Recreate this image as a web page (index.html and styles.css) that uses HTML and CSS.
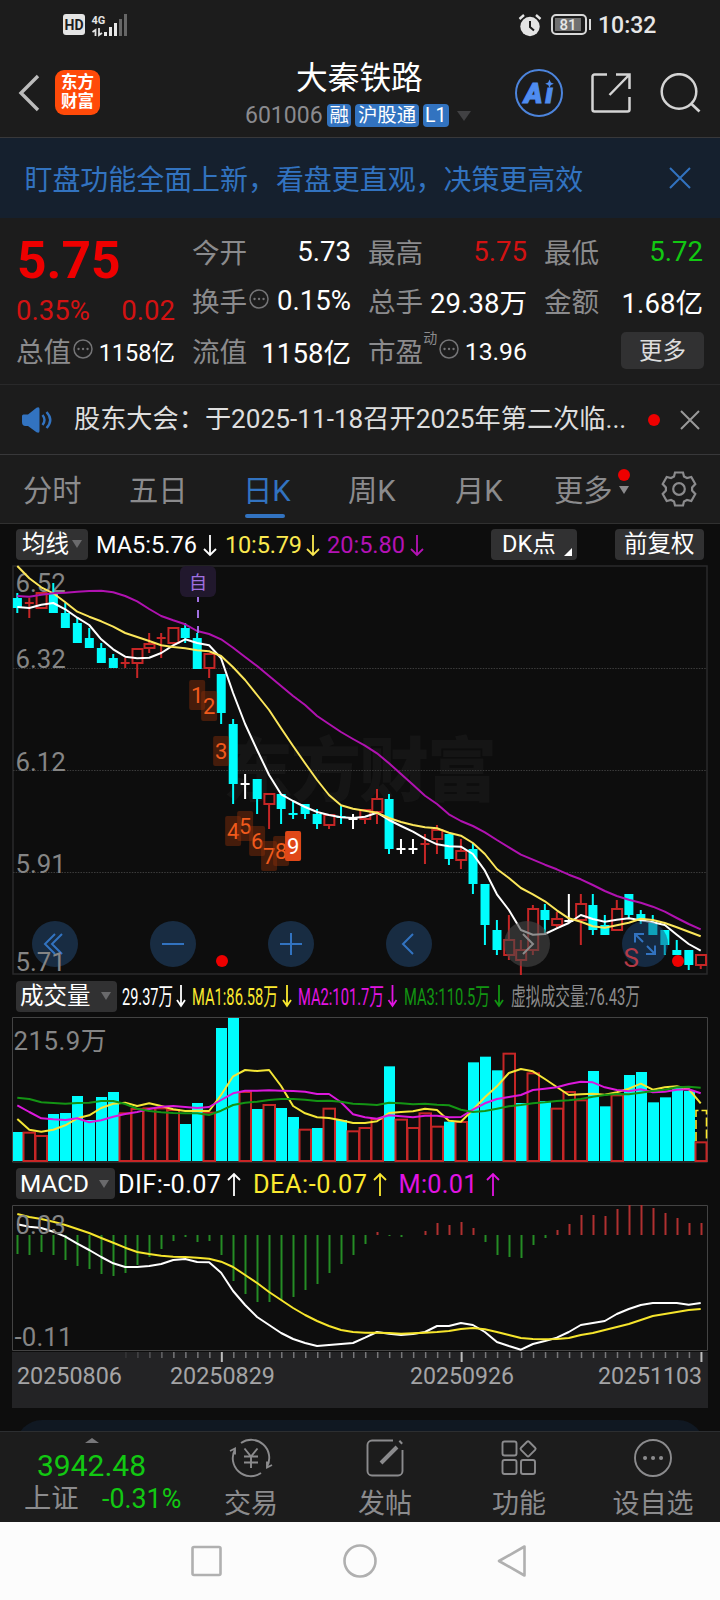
FILE: index.html
```html
<!DOCTYPE html>
<html lang="zh-CN">
<head>
    <meta charset="utf-8">
    <title>大秦铁路 601006</title>
    <link rel="stylesheet" href="styles.css">
</head>
<body>
    <div class="statusbar">
        <span class="hd">HD</span>
        <svg class="signal" width="38" height="26" viewBox="90 11 38 26">
            <text x="91.5" y="23" class="net">4G</text>
            <path d="M95.5 35v-6l-3 2M99 27v7l3-2" fill="none" stroke="#e4e4e4" stroke-width="1.8"/>
            <path d="M105.500 35v-4M110.500 35v-9M115.500 35v-13" stroke="#e8e8e8" stroke-width="3"/>
            <path d="M120.500 35V18M125.500 35V13" stroke="#666" stroke-width="3"/>
        </svg>
        <svg class="alarm" width="24" height="24" viewBox="0 0 24 24">
            <circle cx="12" cy="13.500" r="9.700" fill="#e4e4e4"/>
            <path d="M12 8v6l4 3.500" fill="none" stroke="#1c1c1c" stroke-width="2"/>
            <path d="M1.500 6l4.500-4M22.500 6L18 2" stroke="#e4e4e4" stroke-width="2.400"/>
        </svg>
        <span class="battery"><b>81</b></span>
        <span class="clock">10:32</span>
    </div>

    <div class="header">
        <svg class="back" width="24" height="38" viewBox="0 0 24 38"><path d="M21 2L4 19l17 17" fill="none" stroke="#bcbcbc" stroke-width="3.400"/></svg>
        <div class="logo">东方<br>财富</div>
        <div class="stock">
            <div class="name">大秦铁路</div>
            <div class="code"><span>601006</span><i>融</i><i>沪股通</i><i>L1</i><em></em></div>
        </div>
        <svg class="ai" width="48" height="48" viewBox="0 0 48 48">
            <circle cx="24" cy="24" r="23" fill="none" stroke="#4c84dc" stroke-width="2"/>
            <text x="9" y="34" class="ai-text" textLength="29">Aı</text>
            <path d="M34.500 10.500l1.300 3 3 1.300-3 1.300-1.300 3-1.300-3-3-1.300 3-1.300z" fill="#4f8cf0"/>
        </svg>
        <svg class="share" width="40" height="40" viewBox="0 0 40 40">
            <path d="M16 1.500H3.500a2 2 0 0 0-2 2v33a2 2 0 0 0 2 2h33a2 2 0 0 0 2-2V24M25 1.500h13.500V16M38 2L18.500 22" fill="none" stroke="#d4d4d4" stroke-width="2.500"/>
        </svg>
        <svg class="search" width="41" height="40" viewBox="0 0 41 40">
            <circle cx="19" cy="18.500" r="17.300" fill="none" stroke="#d4d4d4" stroke-width="2.500"/>
            <path d="M31 30.500l8.500 8" stroke="#d4d4d4" stroke-width="2.700"/>
        </svg>
    </div>

    <div class="banner">
        <span>盯盘功能全面上新，看盘更直观，决策更高效</span>
        <svg width="22" height="22" viewBox="0 0 22 22"><path d="M1 1l20 20M21 1L1 21" stroke="#3273c0" stroke-width="2"/></svg>
    </div>

    <div class="quote">
        <div class="cell price">5.75</div>
        <div class="cell"><label>今开</label><b>5.73</b></div>
        <div class="cell"><label>最高</label><b class="red">5.75</b></div>
        <div class="cell"><label>最低</label><b class="green">5.72</b></div>
        <div class="cell change"><b class="red">0.35%</b><b class="red">0.02</b></div>
        <div class="cell"><label>换手</label><svg class="info" viewBox="0 0 20 20"><use href="#info"/></svg><b>0.15%</b></div>
        <div class="cell"><label>总手</label><b>29.38万</b></div>
        <div class="cell"><label>金额</label><b>1.68亿</b></div>
        <div class="cell"><label>总值</label><svg class="info" viewBox="0 0 20 20"><use href="#info"/></svg><b class="small">1158亿</b></div>
        <div class="cell"><label>流值</label><b>1158亿</b></div>
        <div class="cell"><label>市盈</label><sup>动</sup><svg class="info" viewBox="0 0 20 20"><use href="#info"/></svg><b class="mid">13.96</b></div>
        <div class="cell"><span class="more">更多</span></div>
    </div>

    <div class="news">
        <svg width="31" height="26" viewBox="0 0 31 26">
            <path d="M0 9q0-1.500 1.500-1.500H6L14.500.8q3-1.400 3 1.200v22q0 2.600-3 1.200L6 19H3.500Q0 19 0 15z" fill="#3273c0"/>
            <path d="M20.500 8q4 5 0 10M24.500 5q7.500 8 0 16" fill="none" stroke="#3273c0" stroke-width="2.400"/>
        </svg>
        <span class="news-text">股东大会：于2025-11-18召开2025年第二次临...</span>
        <i class="dot"></i>
        <svg class="x" width="20" height="20" viewBox="0 0 20 20"><path d="M1 1l18 18M19 1L1 19" stroke="#999" stroke-width="2"/></svg>
    </div>

    <div class="tabs">
        <span>分时</span>
        <span>五日</span>
        <span class="active">日K</span>
        <span>周K</span>
        <span>月K</span>
        <span class="tab-more">更多<i></i></span>
        <svg width="36" height="36" viewBox="-18 -18 36 36">
            <path d="M-4-16.500h8l1 4 3 1.500 4.300-1 4 7-3.200 3.500v3l3.200 3.500-4 7-4.300-1-3 1.500-1 4h-8l-1-4-3-1.500-4.300 1-4-7 3.200-3.500v-3l-3.200-3.500 4-7 4.300 1 3-1.500z" fill="none" stroke="#8b8b8d" stroke-width="2.200"/>
            <circle r="5.800" fill="none" stroke="#8b8b8d" stroke-width="2.200"/>
        </svg>
    </div>

    <div class="chart">
        <div class="legend legend-ma">
            <span class="chip chip-ma">均线<em></em></span>
            <svg class="values" width="360" height="41" viewBox="92 524 360 41">
                <g class="ma-text">
                    <text x="96" y="552.500" fill="#fff" textLength="101">MA5:5.76</text>
                    <text x="225" y="552.500" fill="#fbe94f" textLength="77">10:5.79</text>
                    <text x="327" y="552.500" fill="#b412b4" textLength="78">20:5.80</text>
                </g>
                <path class="arrow" stroke="#fff" d="M210 535v20m-6-6l6 6 6-6"/>
                <path class="arrow" stroke="#fbe94f" d="M313 535v20m-6-6l6 6 6-6"/>
                <path class="arrow" stroke="#b412b4" d="M417 535v20m-6-6l6 6 6-6"/>
            </svg>
            <span class="chip chip-dk">DK点<u></u></span>
            <span class="chip chip-fq">前复权</span>
        </div>

        <svg id="kline" width="720" height="411" viewBox="0 565 720 411">
            <g class="watermark"><text x="223" y="796" textLength="274">东方财富</text></g>
            <path d="M13 566h694v408H13z" fill="none" stroke="#2a2a2b" stroke-width="1.500"/>
            <path d="M13 668.500h694M13 770.500h694M13 872.500h694" stroke="#3c3c3c" stroke-dasharray="1.500 1.200"/>
            <g class="axis">
                <text x="15.500" y="591.500">6.52</text>
                <text x="15.500" y="668">6.32</text>
                <text x="15.500" y="771">6.12</text>
                <text x="15.500" y="873">5.91</text>
            </g>
            <g id="candles"></g>
            <g id="klines"></g>
            <g id="counts"></g>
            <path d="M198 597v36" stroke="#a070e0" stroke-width="2" stroke-dasharray="5 8 8 8 8 99"/>
            <rect x="180" y="566" width="36" height="31" rx="6" fill="#21182d"/>
            <text x="198" y="588.500" class="zi">自</text>
            <g class="buttons">
                <circle cx="55" cy="944" r="23"/>
                <circle cx="173" cy="944" r="23"/>
                <circle cx="291" cy="944" r="23"/>
                <circle cx="409" cy="944" r="23"/>
                <circle cx="527" cy="944" r="23" class="off"/>
                <circle cx="645" cy="944" r="23"/>
                <path d="M55 934l-10 10 10 10M62 934l-10 10 10 10M162 944h22M280 944h22M291 933v22M413 934l-10 10 10 10"/>
                <path d="M643 942l-8-8m0 8.500V934h9M647 946l8 8m0-8.500v8.500h-9"/>
                <path class="off-line" d="M523 934l10 10-10 10"/>
            </g>
            <text x="623.500" y="967" class="sell">S</text>
            <g class="axis"><text x="15.500" y="971">5.71</text></g>
            <circle cx="222" cy="961" r="6" fill="#ee0000"/>
            <circle cx="678" cy="961" r="6" fill="#ee0000"/>
        </svg>

        <div class="legend legend-vol">
            <span class="chip chip-vol">成交量<em></em></span>
            <svg class="values" width="540" height="41" viewBox="118 976 540 41">
                <g class="vol-text">
                    <text x="122" y="1004.500" fill="#fff" textLength="51" lengthAdjust="spacingAndGlyphs">29.37万</text>
                    <text x="192" y="1004.500" fill="#fbe92f" textLength="86" lengthAdjust="spacingAndGlyphs">MA1:86.58万</text>
                    <text x="298" y="1004.500" fill="#e214e2" textLength="86" lengthAdjust="spacingAndGlyphs">MA2:101.7万</text>
                    <text x="404" y="1004.500" fill="#129412" textLength="86" lengthAdjust="spacingAndGlyphs">MA3:110.5万</text>
                    <text x="511" y="1004.500" fill="#8b8b8b" textLength="129" lengthAdjust="spacingAndGlyphs">虚拟成交量:76.43万</text>
                </g>
                <path class="arrow" stroke="#fff" d="M181 985v21m-4-6l4 6 4-6"/>
                <path class="arrow" stroke="#fbe92f" d="M287 985v21m-4-6l4 6 4-6"/>
                <path class="arrow" stroke="#e214e2" d="M392.500 985v21m-4-6l4 6 4-6"/>
                <path class="arrow" stroke="#129412" d="M499 985v21m-4-6l4 6 4-6"/>
            </svg>
        </div>

        <svg id="volume" width="720" height="146" viewBox="0 1017 720 146">
            <path d="M12.500 1017.500h695v144.500h-695z" fill="none" stroke="#434343"/>
            <g id="bars"></g>
            <g id="vlines"></g>
            <g class="axis"><text x="13.500" y="1049.500" textLength="93">215.9万</text></g>
        </svg>

        <div class="legend">
            <span class="chip chip-macd">MACD<em></em></span>
            <svg class="values" width="400" height="42" viewBox="116 1163 400 42">
                <g class="macd-text">
                    <text x="118" y="1193" fill="#fff" textLength="103">DIF:-0.07</text>
                    <text x="253" y="1193" fill="#fbe92f" textLength="114">DEA:-0.07</text>
                    <text x="398.500" y="1193" fill="#e214e2" textLength="79">M:0.01</text>
                </g>
                <path class="arrow" stroke="#fff" d="M234 1196v-22m-6 6l6-6 6 6"/>
                <path class="arrow" stroke="#fbe92f" d="M380 1196v-22m-6 6l6-6 6 6"/>
                <path class="arrow" stroke="#e214e2" d="M493 1196v-22m-6 6l6-6 6 6"/>
            </svg>
        </div>

        <svg id="macd" width="720" height="147" viewBox="0 1205 720 147">
            <path d="M12.500 1205.500h695v145h-695z" fill="none" stroke="#434343"/>
            <g id="hist"></g>
            <g id="mlines"></g>
            <g class="axis">
                <text x="15.500" y="1233.500">0.03</text>
                <text x="14.500" y="1346" textLength="58">-0.11</text>
            </g>
        </svg>

        <svg id="dates" width="720" height="56" viewBox="0 1352 720 56">
            <rect x="12" y="1352" width="696" height="56" fill="#232325"/>
            <g id="ticks"></g>
            <g class="date">
                <text x="17" y="1384" textLength="105" lengthAdjust="spacingAndGlyphs">20250806</text>
                <text x="170" y="1384" textLength="105" lengthAdjust="spacingAndGlyphs">20250829</text>
                <text x="410" y="1384" textLength="104" lengthAdjust="spacingAndGlyphs">20250926</text>
                <text x="598" y="1384" textLength="104" lengthAdjust="spacingAndGlyphs">20251103</text>
            </g>
        </svg>
        <div class="peek"></div>
    </div>

    <div class="toolbar">
        <div class="index">
            <em></em>
            <div class="index-value">3942.48</div>
            <div class="index-row"><span>上证</span><b>-0.31%</b></div>
        </div>
        <div class="tool">
            <svg width="44" height="40" viewBox="-22 -20 44 40">
                <path d="M-10-15A18 18 0 0 1 16 8.500M10 15A18 18 0 0 1-16-8.500M-21-7l5-2.500v6M21 7l-5 2.500v-6"/>
                <path d="M-6.500-9.500l6.500 8 6.500-8M0-1.500V10M-7-1.500H7M-7 4.500H7"/>
            </svg>
            <span>交易</span>
        </div>
        <div class="tool">
            <svg width="44" height="40" viewBox="-22 -20 44 40">
                <path d="M8-17.500h-21a4.500 4.500 0 0 0-4.500 4.500v26a4.500 4.500 0 0 0 4.500 4.500h26a4.500 4.500 0 0 0 4.500-4.500V-8"/>
                <path d="M12-11L-4 5M15-15l1.500-1.500" stroke-width="4"/>
            </svg>
            <span>发帖</span>
        </div>
        <div class="tool">
            <svg width="44" height="40" viewBox="-22 -20 44 40">
                <rect x="-16.500" y="-16.500" width="14" height="14" rx="2"/>
                <rect x="-16.500" y="2" width="14" height="14" rx="2"/>
                <rect x="2" y="2" width="14" height="14" rx="2"/>
                <rect x="3.300" y="-15" width="11.500" height="11.500" rx="1.500" transform="rotate(45 9 -9.200)"/>
            </svg>
            <span>功能</span>
        </div>
        <div class="tool">
            <svg width="44" height="40" viewBox="-22 -20 44 40">
                <circle r="18"/>
                <path d="M-8 0h.1M0 0h.1M8 0h.1" stroke-width="4" stroke-linecap="round"/>
            </svg>
            <span>设自选</span>
        </div>
    </div>

    <div class="navbar">
        <svg width="36" height="36" viewBox="0 0 36 36"><rect x="3.500" y="4" width="28" height="28" rx="1.500"/></svg>
        <svg width="36" height="36" viewBox="0 0 36 36"><circle cx="18" cy="18" r="15.500"/></svg>
        <svg width="36" height="36" viewBox="0 0 36 36"><path d="M29.500 3.500v29L4 18z"/></svg>
    </div>

    <svg class="defs" width="0" height="0">
        <symbol id="info" viewBox="0 0 20 20">
            <circle cx="10" cy="10" r="9" fill="none" stroke="#747476" stroke-width="1.500"/>
            <path d="M5.500 10h.1M10 10h.1M14.500 10h.1" stroke="#747476" stroke-width="2.300" stroke-linecap="round"/>
        </symbol>
    </svg>
    <script src="chart.js"></script>
</body>
</html>
```
FILE: styles.css
```css
body {
    margin: 0;
    width: 720px;
    height: 1600px;
    overflow: hidden;
    background-color: #0d0d0d;
    color: #fff;
    font-family: Roboto, "Noto Sans CJK SC", sans-serif;
}
svg {
    display: block;
    flex: none;
}
i, em {
    font-style: normal;
}
b {
    font-weight: normal;
}
.defs {
    position: absolute;
}

/* status bar */
.statusbar {
    display: flex;
    align-items: center;
    box-sizing: border-box;
    height: 49px;
    padding-left: 63px;
    background-color: #1c1c1c;
    color: #e6e6e6;
}
.hd {
    width: 22px;
    height: 21px;
    border-radius: 3px;
    background-color: #e4e4e4;
    color: #1c1c1c;
    font-size: 14px;
    font-weight: bold;
    line-height: 22px;
    text-align: center;
}
.signal {
    margin-left: 5px;
}
.net {
    font-size: 11px;
    font-weight: bold;
    fill: #e4e4e4;
}
.alarm {
    margin-left: 390px;
}
.battery {
    position: relative;
    box-sizing: border-box;
    width: 36px;
    height: 21px;
    margin-left: 9px;
    padding: 2px;
    border: 2px solid #d8d8d8;
    border-radius: 5px;
}
.battery::after {
    content: "";
    position: absolute;
    top: 3px;
    right: -6px;
    width: 2px;
    height: 11px;
    background-color: #d8d8d8;
}
.battery b {
    display: block;
    width: 26px;
    height: 13px;
    background-color: #707070;
    font-size: 15px;
    font-weight: 500;
    line-height: 14px;
    text-align: center;
}
.clock {
    margin: 1px 0 0 11px;
    font-size: 23px;
    font-weight: 500;
}

/* header */
.header {
    display: flex;
    box-sizing: border-box;
    height: 89px;
    padding-left: 17px;
    border-bottom: 1px solid #38383a;
    background-color: #1c1c1c;
}
.back {
    margin-top: 25px;
}
.logo {
    box-sizing: border-box;
    width: 45px;
    height: 45px;
    margin: 21px 0 0 14px;
    padding-top: 3px;
    border-radius: 9px;
    background-color: #ff4a09;
    font-size: 16.5px;
    font-weight: bold;
    line-height: 19px;
    text-align: center;
}
.stock {
    width: 240px;
    margin-left: 140px;
}
.name {
    height: 54px;
    padding-left: 56px;
    font-size: 31.7px;
    line-height: 60px;
}
.code {
    display: flex;
    align-items: center;
    gap: 4px;
    height: 25px;
    padding-left: 5px;
    color: #8a8a8e;
    font-size: 23px;
}
.code span {
    width: 78px;
}
.code i {
    height: 23px;
    padding: 0 2.5px;
    border-radius: 4px;
    background-color: #3273c0;
    color: #fff;
    font-size: 19.4px;
    line-height: 23px;
}
.code em {
    margin-left: 4px;
    border: 7.5px solid transparent;
    border-top: 10px solid #414143;
    border-bottom: 0;
}
.ai {
    margin: 20px 0 0 35px;
}
.ai-text {
    fill: #4f8cf0;
    stroke: #4f8cf0;
    font-size: 28px;
    font-weight: 900;
    font-style: italic;
}
.share {
    margin: 24px 0 0 28px;
}
.search {
    margin: 24px 0 0 29px;
}

.banner {
    display: flex;
    align-items: center;
    justify-content: space-between;
    height: 80px;
    padding: 0 29px 0 24.5px;
    background-color: #15202e;
    color: #3273c0;
    font-size: 27.95px;
}

/* quote */
.quote {
    display: grid;
    grid-template-columns: repeat(4, 158px);
    grid-template-rows: 49px 49px 51px;
    column-gap: 18px;
    box-sizing: border-box;
    height: 167px;
    padding: 8px 17px 0;
    border-bottom: 1px solid #29292a;
    background-color: #1c1c1c;
}
.cell {
    display: flex;
    align-items: center;
    justify-content: space-between;
    font-size: 27.6px;
    white-space: nowrap;
}
.cell label {
    margin-left: -1px;
    color: #8b8b8d;
}
.cell b {
    padding-top: 2px;
}
.cell b:last-child {
    margin-left: auto;
}
.cell.price {
    color: #ee0000;
    font-size: 51.5px;
    font-weight: 700;
    padding: 19px 0 0;
}
.cell.change {
    padding-top: 20px;
    margin-left: -1px;
}
.info {
    width: 20px;
    height: 20px;
    margin: -1px 0 0 2px;
}
.cell sup {
    align-self: flex-start;
    margin-top: 2px;
    color: #8b8b8d;
    font-size: 14px;
    line-height: 24px;
}
.cell .small {
    font-size: 23.5px;
}
.cell .mid {
    padding-top: 4px;
    font-size: 24.8px;
}
.red {
    color: #d21212;
}
.green {
    color: #12c812;
}
.more {
    width: 83px;
    height: 37px;
    margin-top: 2px;
    margin-left: auto;
    margin-right: -1px;
    border-radius: 5px;
    background-color: #313132;
    color: #ddd;
    font-size: 23.5px;
    line-height: 38px;
    text-align: center;
}

/* news */
.news {
    display: flex;
    align-items: center;
    box-sizing: border-box;
    height: 70px;
    padding-left: 22px;
    border-bottom: 1px solid #38383a;
    background-color: #1c1c1c;
}
.news-text {
    width: 573px;
    margin: -5px 0 0 21px;
    color: #dedede;
    font-size: 26.2px;
    white-space: nowrap;
}
.dot {
    width: 12px;
    height: 12px;
    margin-left: 1px;
    border-radius: 50%;
    background-color: #ee0000;
}
.news .x {
    margin-left: 20px;
}

/* tabs */
.tabs {
    display: flex;
    box-sizing: border-box;
    height: 69px;
    padding-left: 23px;
    border-bottom: 1px solid #303030;
    background-color: #1c1c1c;
    color: #8b8b8d;
    font-size: 29.3px;
    line-height: 73px;
}
.tabs span {
    width: 106px;
}
.tabs span:nth-child(2) {
    width: 114px;
}
.tabs .active {
    position: relative;
    width: 105px;
    color: #3273c0;
}
.tabs span:nth-child(4) {
    width: 107px;
}
.tabs span:nth-child(5) {
    width: 99px;
}
.active::after {
    content: "";
    position: absolute;
    left: 2px;
    bottom: 5px;
    width: 40px;
    height: 4px;
    border-radius: 2px;
    background-color: #3273c0;
}
.tabs .tab-more {
    position: relative;
}
.tab-more i {
    position: absolute;
    top: 14px;
    left: 64px;
    width: 12px;
    height: 12px;
    border-radius: 50%;
    background-color: #ee0000;
}
.tab-more::after {
    content: "";
    position: absolute;
    top: 31px;
    left: 65px;
    border: 5px solid transparent;
    border-top: 8px solid #8b8b8d;
    border-bottom: 0;
}
.tabs svg {
    margin: 16px 0 0 1px;
}

/* charts */
.chart {
    height: 907px;
    overflow: hidden;
}
.legend {
    display: flex;
    box-sizing: border-box;
    height: 42px;
    padding: 5px 16px 0;
}
.legend-vol, .legend-ma {
    height: 41px;
}
.legend .values {
    margin-top: -5px;
    overflow: visible;
}
.chip {
    box-sizing: border-box;
    height: 31px;
    padding-left: 6px;
    border-radius: 4px;
    background-color: #313132;
    font-size: 23.5px;
    line-height: 31px;
    white-space: nowrap;
}
.chip em {
    display: inline-block;
    border: 5px solid transparent;
    border-top: 8px solid #6a6a6c;
    border-bottom: 0;
    vertical-align: 4px;
}
.chip-ma {
    width: 72px;
    margin-right: 4px;
}
.chip-ma em {
    margin-left: 3px;
}
.chip-dk {
    position: relative;
    width: 86px;
    margin-left: 39px;
    padding-left: 11px;
}
.chip-dk u {
    position: absolute;
    right: 5px;
    bottom: 4px;
    border-left: 8px solid transparent;
    border-bottom: 8px solid #fff;
}
.chip-fq {
    width: 89px;
    margin-left: 38px;
    padding-left: 9px;
}
.chip-vol {
    width: 101px;
    margin-right: 1px;
    padding-left: 4px;
}
.chip-vol em, .chip-macd em {
    margin-left: 10px;
}
.chip-macd {
    width: 99px;
    margin-right: 1px;
    padding-left: 4px;
    font-size: 24.3px;
    line-height: 32px;
}
.ma-text {
    font-size: 23.5px;
}
.vol-text {
    font-size: 24px;
}
.macd-text {
    font-size: 25.3px;
}
.arrow {
    fill: none;
    stroke-width: 1.8;
}
.axis text {
    fill: #858585;
    font-size: 25.8px;
}
.date text {
    fill: #a4a4a6;
    font-size: 24.3px;
}
.watermark text {
    fill: #151515;
    font-size: 70px;
    font-weight: 900;
}
.zi {
    fill: #a070e0;
    font-size: 18px;
    text-anchor: middle;
}
.sell {
    fill: #b43a46;
    font-size: 26px;
}
.count {
    fill: #f05a1c;
    font-size: 22px;
    text-anchor: middle;
}
.count.last {
    fill: #fff;
}
.buttons circle {
    fill: #1c3450;
    fill-opacity: 0.8;
}
.buttons circle.off {
    fill: #484848;
    fill-opacity: 0.6;
}
.buttons circle:nth-of-type(6) {
    fill: #1e4878;
    fill-opacity: 0.5;
}
.buttons path {
    fill: none;
    stroke: #3273c0;
    stroke-width: 2;
}
.buttons .off-line {
    stroke: #8a8a8a;
}
.peek {
    height: 40px;
    margin: 12px 16px 0;
    border-radius: 26px 26px 0 0;
    background-color: #101822;
}

/* bottom toolbar */
.toolbar {
    display: flex;
    box-sizing: border-box;
    height: 91px;
    border-top: 1px solid #2c2e30;
    background-color: #1c1c1c;
}
.index {
    width: 184px;
    color: #12c812;
}
.index em {
    display: block;
    width: 0;
    margin: 6px 0 0 85px;
    border: 7px solid transparent;
    border-bottom: 5px solid #77777a;
    border-top: 0;
}
.index-value {
    height: 40px;
    padding-left: 37px;
    font-size: 30px;
    line-height: 45px;
}
.index-row {
    display: flex;
    align-items: center;
    height: 32px;
    font-size: 26.8px;
}
.index-row span {
    width: 78px;
    padding-left: 24px;
    color: #8b8b8d;
    font-size: 27.3px;
    line-height: 26px;
}
.tool {
    display: flex;
    flex-direction: column;
    align-items: center;
    width: 134px;
    padding-top: 6px;
    color: #8b8b8d;
    font-size: 27px;
    line-height: 52px;
}
.tool svg {
    fill: none;
    stroke: #8b8b8d;
    stroke-width: 1.9;
}
.navbar {
    display: flex;
    justify-content: center;
    gap: 117px;
    box-sizing: border-box;
    height: 78px;
    padding-top: 21px;
    background-color: #fcfcfc;
}
.navbar svg {
    fill: none;
    stroke: #b0b0b0;
    stroke-width: 2.6;
    stroke-linejoin: round;
}
```
FILE: chart.js
```javascript
const CYAN = '#00fdfd';
const RED = '#c62626';
const NS = 'http://www.w3.org/2000/svg';

function add(parent, tag, attrs, text) {
    const el = document.createElementNS(NS, tag);
    for (const key in attrs) {
        el.setAttribute(key, attrs[key]);
    }
    if (text) el.textContent = text;
    document.getElementById(parent).appendChild(el);
}

const x = i => 17.3 + i * 11.99;

function line(parent, values, color, y = v => v) {
    const points = values.map((v, i) => x(i).toFixed(1) + ',' + y(v).toFixed(1)).join(' ');
    add(parent, 'polyline', { points, fill: 'none', stroke: color, 'stroke-width': 2, 'stroke-linejoin': 'round' });
}

// [type, high, body top, body bottom, low]; c = down, r = up, w = flat
const candles = [
    ['c', 593, 598, 608, 613], ['r', 598, 603, 603, 618], ['r', 592, 592, 609, 609], ['c', 583, 593, 613, 613],
    ['c', 603, 613, 628, 628], ['c', 618, 623, 643, 643], ['c', 628, 638, 648, 648], ['c', 643, 648, 663, 663],
    ['c', 654, 658, 668, 668], ['r', 658, 663, 663, 668], ['r', 648, 648, 664, 678], ['r', 633, 643, 649, 653],
    ['r', 633, 638, 638, 658], ['r', 627, 627, 644, 644], ['c', 623, 628, 638, 643], ['c', 633, 638, 669, 669],
    ['r', 653, 653, 669, 678], ['c', 674, 674, 713, 724], ['c', 719, 724, 784, 804], ['w', 774, 784, 784, 799],
    ['c', 779, 779, 799, 814], ['r', 793, 793, 805, 829], ['c', 794, 794, 809, 824], ['c', 801, 814, 814, 819],
    ['c', 804, 804, 814, 819], ['c', 809, 814, 824, 829], ['r', 814, 814, 826, 829], ['c', 806, 817, 817, 824],
    ['w', 814, 819, 819, 829], ['r', 809, 809, 820, 824], ['r', 789, 798, 813, 824], ['c', 794, 799, 849, 854],
    ['w', 839, 849, 849, 854], ['w', 839, 849, 849, 854], ['r', 834, 844, 844, 864], ['r', 825, 829, 840, 854],
    ['c', 834, 834, 859, 865], ['r', 839, 850, 861, 869], ['c', 843, 849, 884, 894], ['c', 884, 884, 925, 945],
    ['c', 920, 930, 950, 955], ['r', 915, 939, 956, 960], ['r', 940, 949, 961, 975], ['r', 905, 908, 951, 955],
    ['c', 904, 910, 920, 935], ['r', 912, 918, 926, 928], ['w', 894, 921, 921, 923], ['r', 894, 903, 921, 945],
    ['c', 894, 905, 930, 935], ['c', 915, 925, 935, 935], ['r', 900, 908, 931, 931], ['c', 894, 894, 915, 919],
    ['c', 910, 914, 921, 924], ['c', 915, 923, 935, 935], ['c', 930, 930, 945, 955], ['c', 940, 950, 955, 955],
    ['c', 950, 950, 965, 970], ['r', 954, 954, 966, 969]
];
candles.forEach(([type, high, top, bottom, low], i) => {
    const color = { c: CYAN, r: RED, w: '#fff' }[type];
    const cx = x(i);
    if (top === bottom) {
        add('candles', 'path', { d: `M${cx} ${high}V${low}M${cx - 4.5} ${top}h9`, stroke: color, 'stroke-width': 2 });
    } else if (type === 'c') {
        add('candles', 'path', { d: `M${cx} ${high}V${low}`, stroke: color, 'stroke-width': 2 });
        add('candles', 'rect', { x: cx - 4.4, y: top, width: 9, height: bottom - top, fill: color });
    } else {
        add('candles', 'path', { d: `M${cx} ${high}V${top}M${cx} ${bottom}V${low}`, stroke: color, 'stroke-width': 2 });
        add('candles', 'rect', { x: cx - 4.7, y: top + 1, width: 10, height: bottom - top - 2, fill: 'none', stroke: color, 'stroke-width': 2 });
    }
});

line('klines', [607, 608, 604.7, 603, 609.3, 617.7, 625, 639.3, 649.3, 656.7, 658.3, 657.7, 653, 645.3, 639.3, 643, 645.3, 658.3, 693, 724,
    750, 775, 794.3, 801, 807, 812, 815, 817.3, 818, 816.7, 812.7, 820, 826, 831.7, 838.7, 844.3, 846.3, 846.7, 854, 870.7,
    894.3, 910, 930, 934.7, 934, 928.3, 923, 915, 919, 921.7, 919.7, 918.3, 920.3, 922.3, 925, 934.7, 944, 950.7], '#fff');
line('klines', [566, 578.3, 587.3, 593.3, 602.3, 611.7, 616.7, 621.3, 626.7, 633, 637, 641, 645.3, 647, 648.3, 650.3, 651.3, 656, 667.3, 680,
    695, 710, 728.3, 746, 763.3, 780, 795, 805.3, 808.7, 810.7, 812.7, 818, 822, 825, 827.3, 828.3, 832.7, 835.7, 843, 854,
    869, 878, 888, 894.3, 901.3, 910.3, 918.3, 921.7, 926.3, 927.7, 925.3, 922.7, 918.7, 920, 923, 927.3, 931.7, 936.3], '#fbe65a');
line('klines', [596, 596.7, 594.7, 593.3, 592.7, 591.7, 591, 590.7, 592.3, 596, 601.3, 609, 616, 620.3, 624.3, 631, 634, 639.3, 647.7, 657,
    666, 676, 686, 696, 705, 716, 724, 732, 739, 745.7, 753.3, 763.3, 774, 784.7, 795.7, 804, 814.3, 821, 826, 832.3,
    840, 847.3, 854.7, 859.7, 864.7, 869.3, 874.7, 879.3, 885, 891, 896, 899.7, 902.7, 906.7, 911.7, 918, 924, 929.3], '#b012b0');

// nine-count markers, starting at candle 15
[680, 691, 736, 816, 811, 826, 841, 836, 831].forEach((top, n) => {
    const last = n === 8;
    const cx = x(n + 15);
    add('counts', 'rect', { x: cx - 8, y: top, width: 16, height: 30, rx: 2, fill: last ? '#e04818' : '#8a2e08', 'fill-opacity': last ? 1 : 0.45 });
    add('counts', 'text', { x: cx, y: top + 22.500, class: last ? 'count last' : 'count' }, String(n + 1));
});

// volume, measured in thirds of a pixel from the top
const vy = v => 1005 + v / 3;
const vols = [381, 380, 390, 327, 324, 273, 345, 276, 261, 322, 309, 307, 307, 312, 357, 294, 320, 69, 39, 258,
    312, 297, 309, 336, 371, 369, 308, 345, 376, 366, 339, 184, 341, 366, 322, 362, 350, 348, 172, 155,
    196, 143, 294, 202, 288, 308, 258, 283, 198, 304, 268, 210, 201, 292, 277, 243, 258, 409];
const dirs = 'crrccccccrrrrrccrccrcrccrcrcrrrcrrrrcrcccrcrcrrrccrccccccr';
vols.forEach((v, i) => {
    const top = vy(v);
    const left = 12 + i * 12;
    if (dirs[i] === 'c') {
        add('bars', 'rect', { x: left + (i ? 0 : 1), y: top, width: i ? 11 : 10, height: 1161 - top, fill: CYAN });
    } else {
        add('bars', 'rect', { x: left - 0.5, y: top + 1, width: i === 57 ? 11 : 11.5, height: 1160 - top, fill: 'none', stroke: RED, 'stroke-width': 2 });
    }
});
add('bars', 'path', { d: 'M696 1141V1110.500H706.500V1141', fill: 'none', stroke: '#fbe92f', 'stroke-width': 1.6, 'stroke-dasharray': '9 3' });

line('vlines', [342, 374, 380, 374, 361, 340, 331, 309, 296, 293, 303, 295, 303, 313, 318, 317, 318, 270, 214, 195,
    198, 195, 243, 303, 325, 337, 339, 346, 354, 354, 349, 324, 321, 319, 311, 315, 347, 350, 314, 277,
    244, 204, 192, 199, 222, 246, 270, 268, 266, 269, 262, 251, 236, 254, 247, 244, 252, 295], '#f4e636', vy);
line('vlines', [301, 321, 340, 343, 345, 340, 352, 346, 335, 327, 321, 312, 305, 303, 306, 309, 306, 285, 265, 257,
    257, 256, 257, 258, 260, 267, 267, 292, 328, 337, 341, 331, 334, 337, 332, 332, 337, 336, 314, 295,
    282, 276, 270, 255, 251, 247, 237, 230, 232, 247, 255, 259, 253, 262, 260, 254, 253, 265], '#dc18dc', vy);
line('vlines', [278, 282, 292, 294, 296, 294, 293, 288, 288, 297, 311, 318, 322, 324, 325, 325, 330, 317, 300, 293,
    290, 285, 282, 282, 284, 288, 287, 290, 296, 298, 300, 293, 295, 298, 296, 299, 301, 314, 321, 318,
    311, 304, 300, 295, 292, 288, 286, 282, 275, 270, 267, 268, 263, 258, 254, 247, 245, 248], '#149414', vy);

// MACD
[-19, -20, -17, -20, -25, -31, -34, -39, -41, -38, -30, -22, -14, -6, -2, -7, -6, -20, -46, -59,
    -67, -67, -65, -62, -55, -49, -38, -29, -20, -9, 3, -1, -2, 0, 4, 12, 10, 13, 7, -7,
    -20, -22, -23, -10, -3, 5, 11, 20, 20, 19, 26, 30, 30, 27, 22, 17, 12, 12].forEach((v, i) => {
    const cx = Math.round(x(i)) + 0.5;
    if (v) add('hist', 'path', { d: `M${cx} 1235v${-v}`, stroke: v > 0 ? '#b03030' : '#258c25', 'stroke-width': 2 });
});
const my = v => 1195 + v / 3;
line('mlines', [88, 95, 99, 110, 125, 146, 165, 186, 205, 216, 216, 213, 207, 195, 192, 201, 202, 233, 288, 330,
    366, 390, 414, 432, 444, 453, 450, 447, 444, 428, 411, 416, 420, 417, 411, 393, 393, 384, 390, 411,
    441, 453, 464, 447, 438, 428, 411, 390, 384, 378, 357, 342, 330, 324, 324, 324, 329, 324], '#fff', my);
line('mlines', [57, 66, 72, 80, 90, 102, 114, 129, 143, 158, 171, 177, 182, 185, 186, 188, 191, 200, 216, 240,
    264, 291, 315, 339, 360, 378, 393, 405, 411, 413, 413, 414, 416, 415, 413, 411, 408, 402, 399, 403,
    411, 420, 429, 432, 433, 432, 429, 420, 414, 405, 396, 387, 375, 363, 357, 351, 345, 342], '#f6e52c', my);

// date ruler, the first ticks fade in
for (let i = 9; i < 58; i++) {
    const major = i % 20 === 17;
    add('ticks', 'path', {
        d: `M${x(i) + 0.7} 1352v${major ? 10 : 6}`,
        stroke: major ? '#bdbdbd' : '#77777a',
        'stroke-width': major ? 2 : 1.5,
        opacity: Math.min(1, (i - 8) / 5)
    });
}
```
